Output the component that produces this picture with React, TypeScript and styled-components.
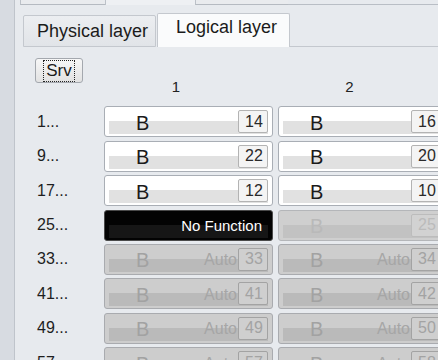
import React from "react";
import styled, { createGlobalStyle, css } from "styled-components";

const GlobalStyle = createGlobalStyle`
  html, body { margin: 0; padding: 0; }
  body {
    font-family: "Liberation Sans", Arial, sans-serif;
    background: #e7eaee;
  }
`;

const Frame = styled.div`
  width: 438px;
  height: 360px;
  overflow: hidden;
  display: flex;
  background: #e7eaee;
`;

const LeftStrip = styled.div`
  width: 14px;
  flex: none;
  background: #d7dbe1;
  border-right: 1px solid #bfc4cb;
`;

const Main = styled.div`
  flex: 1;
  min-width: 0;
  display: flex;
  flex-direction: column;
  & > * {
    flex-shrink: 0;
  }
`;

const OuterTabBar = styled.div`
  display: flex;
  height: 5px;
  padding-left: 5px;
`;

const OuterTab = styled.div<{ $w: number; $active?: boolean }>`
  width: ${(p) => p.$w}px;
  flex: none;
  box-sizing: border-box;
  border-left: 1px solid #bcc1c8;
  border-bottom: ${(p) => (p.$active ? "none" : "1px solid #b5bac1")};
  background: ${(p) => (p.$active ? "#eef0f3" : "#e9ebee")};
  &:last-of-type {
    border-right: 1px solid #bcc1c8;
  }
`;

const TabFiller = styled.div`
  flex: 1;
  border-bottom: 1px solid #b9bec5;
`;

const InnerTabBar = styled.div`
  display: flex;
  align-items: flex-end;
  height: 42px;
  padding-left: 8px;
`;

const InnerTab = styled.div<{ $active?: boolean }>`
  box-sizing: border-box;
  width: 133px;
  flex: none;
  display: flex;
  justify-content: center;
  padding-left: 6px;
  font-size: 18px;
  line-height: 20px;
  color: #1b1b1b;
  border: 1px solid #c4c8ce;
  border-radius: 2px 2px 0 0;
  ${(p) =>
    p.$active
      ? css`
          height: 34px;
          padding-top: 3px;
          margin-left: 1px;
          border-bottom: none;
          background: #fafbfc;
        `
      : css`
          height: 32px;
          padding-top: 5px;
          background: linear-gradient(#eceef1, #e1e4e8);
        `}
`;

const InnerFiller = styled.div`
  flex: 1;
  border-bottom: 1px solid #c4c8ce;
`;

const Panel = styled.div`
  padding-top: 11px;
  display: grid;
  grid-template-columns: 84px 169px 168px;
  grid-template-rows: 45px;
  grid-auto-rows: 31px;
  column-gap: 5px;
  row-gap: 3.4px;
`;

const SrvButton = styled.button`
  margin-left: 20px;
  align-self: start;
  width: 48px;
  height: 25px;
  padding: 0;
  display: flex;
  align-items: center;
  justify-content: center;
  border: 1px solid #a4a8ae;
  border-radius: 3px;
  background: linear-gradient(#f7f7f7, #e2e2e2);
  font-family: "Liberation Sans", Arial, sans-serif;
  font-size: 17px;
  color: #1b1b1b;
`;

const FocusRing = styled.span`
  border: 1px dotted #222;
  padding: 0 2px;
  line-height: 20px;
`;

const ColHeader = styled.div`
  display: flex;
  justify-content: center;
  padding-right: 25px;
  padding-top: 20px;
  font-size: 15px;
  color: #222;
`;

const RowLabel = styled.div`
  align-self: center;
  padding-left: 22px;
  font-size: 16px;
  color: #1e1e1e;
`;

type Variant = "normal" | "auto" | "dim" | "black";

const palette = {
  normal: { bg: "#ffffff", band: "#e1e1e1", border: "#a9aeb5", b: "#1a1a1a" },
  auto: { bg: "#cdcdcd", band: "#bababa", border: "#a9abaf", b: "#a2a2a2" },
  dim: { bg: "#cfcfcf", band: "#c2c2c2", border: "#b4b6b9", b: "#b9b9b9" },
  black: { bg: "#030303", band: "#161616", border: "#4a4a4a", b: "#fff" },
};

const Cell = styled.div<{ $v: Variant }>`
  box-sizing: border-box;
  display: flex;
  align-items: center;
  padding-left: 31px;
  padding-right: 4px;
  border: 1px solid ${(p) => palette[p.$v].border};
  border-radius: 3px;
  background: linear-gradient(${(p) => palette[p.$v].band}, ${(p) => palette[p.$v].band})
      no-repeat 4px calc(100% - 2px) / calc(100% - 8px) 13px,
    ${(p) => palette[p.$v].bg};
`;

const Letter = styled.span<{ $v: Variant }>`
  font-size: 20px;
  padding-top: 3px;
  color: ${(p) => palette[p.$v].b};
  flex: 1;
`;

const AutoText = styled.span`
  font-size: 16px;
  color: #a6a6a6;
  margin-right: 1px;
  padding-top: 2px;
`;

const NumBox = styled.span<{ $v: Variant }>`
  box-sizing: border-box;
  width: 30px;
  height: 23px;
  display: flex;
  align-items: center;
  justify-content: center;
  padding-left: 2px;
  font-size: 16px;
  border-radius: 2px;
  ${(p) =>
    p.$v === "normal"
      ? css`
          border: 1px solid #b3b3b3;
          background: #f4f4f4;
          color: #2a2a2a;
        `
      : p.$v === "auto"
      ? css`
          border: 1px solid #a3a3a3;
          background: #cfcfcf;
          color: #a3a3a3;
        `
      : css`
          border: 1px solid #bcbcbc;
          background: #d2d2d2;
          color: #bbbbbb;
        `}
`;

const NoFunction = styled.span`
  flex: 1;
  text-align: right;
  padding-right: 6px;
  font-size: 15px;
  color: #ffffff;
`;

type CellData = { v: Variant; n?: number };

const rows: { label: string; cells: CellData[] }[] = [
  { label: "1...", cells: [{ v: "normal", n: 14 }, { v: "normal", n: 16 }] },
  { label: "9...", cells: [{ v: "normal", n: 22 }, { v: "normal", n: 20 }] },
  { label: "17...", cells: [{ v: "normal", n: 12 }, { v: "normal", n: 10 }] },
  { label: "25...", cells: [{ v: "black" }, { v: "dim", n: 25 }] },
  { label: "33...", cells: [{ v: "auto", n: 33 }, { v: "auto", n: 34 }] },
  { label: "41...", cells: [{ v: "auto", n: 41 }, { v: "auto", n: 42 }] },
  { label: "49...", cells: [{ v: "auto", n: 49 }, { v: "auto", n: 50 }] },
  { label: "57...", cells: [{ v: "auto", n: 57 }, { v: "auto", n: 58 }] },
];

function ChannelCell({ v, n }: CellData) {
  if (v === "black") {
    return (
      <Cell $v="black">
        <NoFunction>No Function</NoFunction>
      </Cell>
    );
  }
  return (
    <Cell $v={v}>
      <Letter $v={v}>B</Letter>
      {v === "auto" && <AutoText>Auto</AutoText>}
      <NumBox $v={v}>{n}</NumBox>
    </Cell>
  );
}

export default function App() {
  return (
    <>
      <GlobalStyle />
      <Frame>
        <LeftStrip />
        <Main>
          <OuterTabBar>
            <OuterTab $w={85} />
            <OuterTab $w={90} $active />
            <OuterTab $w={93} />
            <TabFiller />
          </OuterTabBar>
          <InnerTabBar>
            <InnerTab>Physical layer</InnerTab>
            <InnerTab $active>Logical layer</InnerTab>
            <InnerFiller />
          </InnerTabBar>
          <Panel>
            <SrvButton>
              <FocusRing>Srv</FocusRing>
            </SrvButton>
            <ColHeader>1</ColHeader>
            <ColHeader>2</ColHeader>
            {rows.map((r) => (
              <React.Fragment key={r.label}>
                <RowLabel>{r.label}</RowLabel>
                {r.cells.map((c, i) => (
                  <ChannelCell key={i} {...c} />
                ))}
              </React.Fragment>
            ))}
          </Panel>
        </Main>
      </Frame>
    </>
  );
}
